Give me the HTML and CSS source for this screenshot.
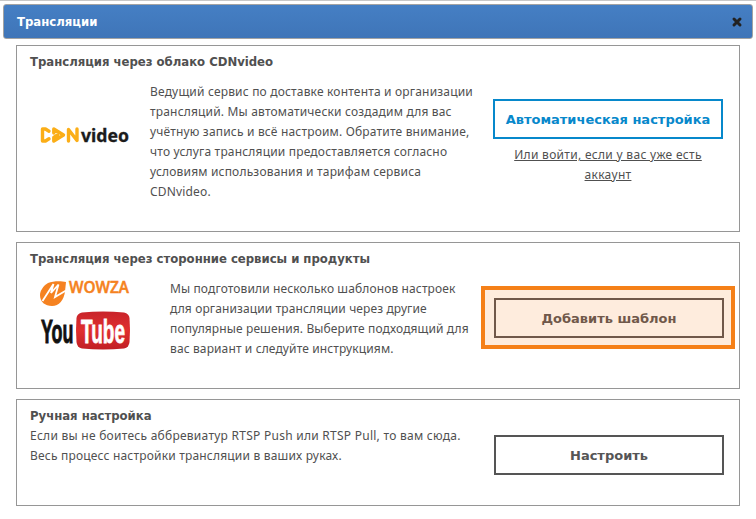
FILE: index.html
```html
<!DOCTYPE html>
<html lang="ru">
<head>
<meta charset="utf-8">
<title>Трансляции</title>
<link rel="stylesheet" href="styles.css">
</head>
<body>
<main class="dialog">
  <header class="titlebar">
    <span class="title">Трансляции</span>
    <svg class="close" viewBox="0 0 10 10"><path d="M2 2L8 8M8 2L2 8"/></svg>
  </header>
  <section class="card card-cloud">
    <div class="info">
      <h2>Трансляция через облако CDNvideo</h2>
      <div class="row">
        <svg class="logo-cdn" viewBox="0 0 90 22">
          <g class="cdn-mark">
            <path d="M9 5.2L5.500 3H2.500V15H5.500L9 12.800"/>
            <path d="M13.800 7V3L23.500 9L13.800 15V11.500L17.500 9"/>
            <path d="M28.500 15V3.500L37 14.500V3"/>
          </g>
          <text class="cdn-text" x="41" y="16.300" textLength="48" lengthAdjust="spacingAndGlyphs">video</text>
        </svg>
        <p class="copy copy-cloud">Ведущий сервис по доставке контента и организации<br>трансляций. Мы автоматически создадим для вас<br>учётную запись и всё настроим. Обратите внимание,<br>что услуга трансляции предоставляется согласно<br>условиям использования и тарифам сервиса<br>CDNvideo.</p>
      </div>
    </div>
    <div class="action">
      <button class="button button-blue">Автоматическая настройка</button>
      <a class="login">Или войти, если у вас уже есть<br>аккаунт</a>
    </div>
  </section>
  <section class="card card-services">
    <div class="info">
      <h2>Трансляция через сторонние сервисы и продукты</h2>
      <div class="row">
        <div class="logos">
          <svg class="logo-wowza" viewBox="0 0 92 27">
            <path class="wowza-mark" d="M8 2C3 5 0 10 0 14C0 21 5 25 12 25C19 25 24 19 25 10.500L26 1C21 0 13 0 8 2Z"/>
            <path class="wowza-bolt" d="M2.500 20L13.500 3L11 12L18.500 3.500L15 16L26 9.500"/>
            <text class="wowza-text" x="29" y="12" textLength="60" lengthAdjust="spacingAndGlyphs">WOWZA</text>
          </svg>
          <svg class="logo-youtube" viewBox="0 0 92 44">
            <defs><linearGradient id="tube" x2="0" y2="1"><stop offset="0" stop-color="#c8242a"/><stop offset=".5" stop-color="#e02f2f"/><stop offset="1" stop-color="#c01f25"/></linearGradient></defs>
            <path fill="url(#tube)" d="M42 4.500Q63 2.500 84 4.500Q89 5.500 89.500 10Q90.500 22 89.500 34Q89 39.500 84 40.500Q63 42.500 42 40.500Q37 39.500 36.500 34Q35.500 22 36.500 10Q37 5.500 42 4.500Z"/>
            <text class="you" x="1" y="34.500" textLength="32.500" lengthAdjust="spacingAndGlyphs">You</text>
            <text class="tube" x="41" y="34.500" textLength="44" lengthAdjust="spacingAndGlyphs">Tube</text>
          </svg>
        </div>
        <p class="copy copy-services">Мы подготовили несколько шаблонов настроек<br>для организации трансляции через другие<br>популярные решения. Выберите подходящий для<br>вас вариант и следуйте инструкциям.</p>
      </div>
    </div>
    <div class="highlight"><button class="button button-brown">Добавить шаблон</button></div>
  </section>
  <section class="card card-manual">
    <div class="info">
      <h2>Ручная настройка</h2>
      <p class="copy copy-manual">Если вы не боитесь аббревиатур RTSP Push или RTSP Pull, то вам сюда.<br><span class="tight">Весь процесс настройки трансляции в ваших руках.</span></p>
    </div>
    <button class="button button-gray">Настроить</button>
  </section>
</main>
</body>
</html>
```
FILE: styles.css
```css
* { box-sizing: border-box; }
body { margin: 0; background: #fff; color: #505050; font: 12px/20px "Noto Sans", sans-serif; }
h2, p { margin: 0; }
svg { display: block; overflow: visible; }
.dialog { height: 519px; border-top: 1px solid #c8c8c8; padding: 3px 3px 0; overflow: hidden; }
.titlebar { display: flex; align-items: center; justify-content: space-between; width: 750px; height: 35px; padding: 0 10px 0 13px; border: 1px solid #a3a3a3; border-radius: 3px; background: linear-gradient(#457fc4, #3f75b8); }
.title { color: #fff; font: bold 13px/20px "DejaVu Sans Condensed", "DejaVu Sans", sans-serif; }
.close { width: 10px; height: 10px; fill: none; stroke: #222; stroke-width: 3; stroke-linecap: round; }
.card { display: flex; width: 724px; margin-left: 13px; padding: 6px 0 0 13px; border: 1px solid #969696; }
.card-cloud { height: 187px; margin-top: 6px; }
.card-services { height: 147px; margin-top: 10px; }
.card-manual { height: 107px; margin-top: 10px; }
h2 { font: bold 13px/20px "DejaVu Sans Condensed", "DejaVu Sans", sans-serif; letter-spacing: -0.02px; white-space: nowrap; }
.info { width: 463px; }
.row { display: flex; }
.copy { white-space: nowrap; }
.logo-cdn { width: 90px; height: 22px; margin: 54px 0 0 10px; }
.cdn-mark { fill: none; stroke: #fbae17; stroke-width: 3.4; stroke-linejoin: round; stroke-linecap: round; }
.cdn-text { font: bold 17px "Noto Sans", sans-serif; fill: #1c1c1c; stroke: #1c1c1c; stroke-width: 0.3px; }
.copy-cloud { margin: 10px 0 0 20px; letter-spacing: 0.18px; }
.action { width: 230px; margin-top: 47px; text-align: center; }
.button { display: block; width: 230px; height: 40px; padding: 1px 0 0; border: 2px solid; background: transparent; font: bold 13px/20px "DejaVu Sans", sans-serif; }
.button-blue { color: #0788cb; border-color: #0788cb; }
.login { display: block; margin-top: 6px; text-decoration: underline; letter-spacing: 0.3px; }
.logos { width: 92px; margin: 12px 0 0 10px; }
.logo-wowza { width: 92px; height: 27px; }
.logo-youtube { width: 92px; height: 44px; }
.wowza-mark { fill: #f58220; }
.wowza-bolt { fill: none; stroke: #fff; stroke-width: 1.8; }
.wowza-text { font: 600 16px "Open Sans", sans-serif; fill: #f58220; stroke: #f58220; stroke-width: 0.5px; }
.you, .tube { font: bold 34px "Liberation Sans", sans-serif; fill: #111; stroke: #111; stroke-width: 1px; }
.tube { fill: #fff; stroke: #fff; stroke-width: 0.8px; }
.copy-services { margin: 10px 0 0 38px; letter-spacing: 0.12px; }
.copy-manual { letter-spacing: 0.26px; }
.tight { letter-spacing: 0.19px; }
.highlight { width: 254px; height: 63px; margin: 37px 0 0 -12px; padding: 8px 9px; border: 4px solid #f58018; background: #feecdd; }
.button-brown { color: #70584a; border-color: #70584a; }
.button-gray { margin: 29px 0 0 1px; color: #555; border-color: #555; }
```
